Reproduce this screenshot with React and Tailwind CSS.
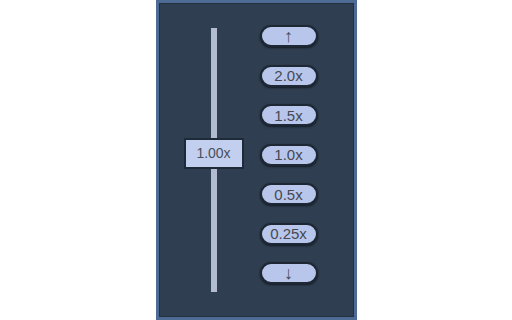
import React, { useState } from 'react';

const speeds = ['↑', '2.0x', '1.5x', '1.0x', '0.5x', '0.25x', '↓'];

const App = () => {
  const [speed, setSpeed] = useState('1.00x');

  return (
    <div className="w-[512px] h-[320px] bg-white flex justify-center" style={{ fontFamily: '"Liberation Sans", Arial, sans-serif' }}>
      <div className="w-[201px] h-[320px] border-[3px] border-[#4d6b95] bg-[#2f3e50] shadow-[inset_0_0_0_1px_#233040] flex">
        {/* slider */}
        <div className="w-[110px] flex justify-center pt-[25px]">
          <div className="relative w-[6px] h-[264px] bg-[#b2bbcf]">
            <div className="absolute left-1/2 -translate-x-1/2 top-[110px] w-[60px] h-[31px] bg-[#c3cfee] border-2 border-[#1f2a38] flex items-center justify-center text-[14px] text-[#4a505b]">
              {speed}
            </div>
          </div>
        </div>
        {/* buttons */}
        <div className="flex flex-col items-center gap-[17.5px] pt-[22px] ml-[-9px]">
          {speeds.map((s) => (
            <button
              key={s}
              onClick={() => setSpeed(s)}
              className={
                s === '↑' || s === '↓'
                  ? 'w-[58px] h-[22px] rounded-full bg-[#b9c6ec] border-2 border-[#1e2835] shadow-[0_1px_2px_#141c26] text-[18px] text-[#444952] flex items-center justify-center leading-none'
                  : 'w-[58px] h-[22px] rounded-full bg-[#b9c6ec] border-2 border-[#1e2835] shadow-[0_1px_2px_#141c26] text-[15px] text-[#444952] flex items-center justify-center leading-none'
              }
            >
              {s}
            </button>
          ))}
        </div>
      </div>
    </div>
  );
};

export default App;
